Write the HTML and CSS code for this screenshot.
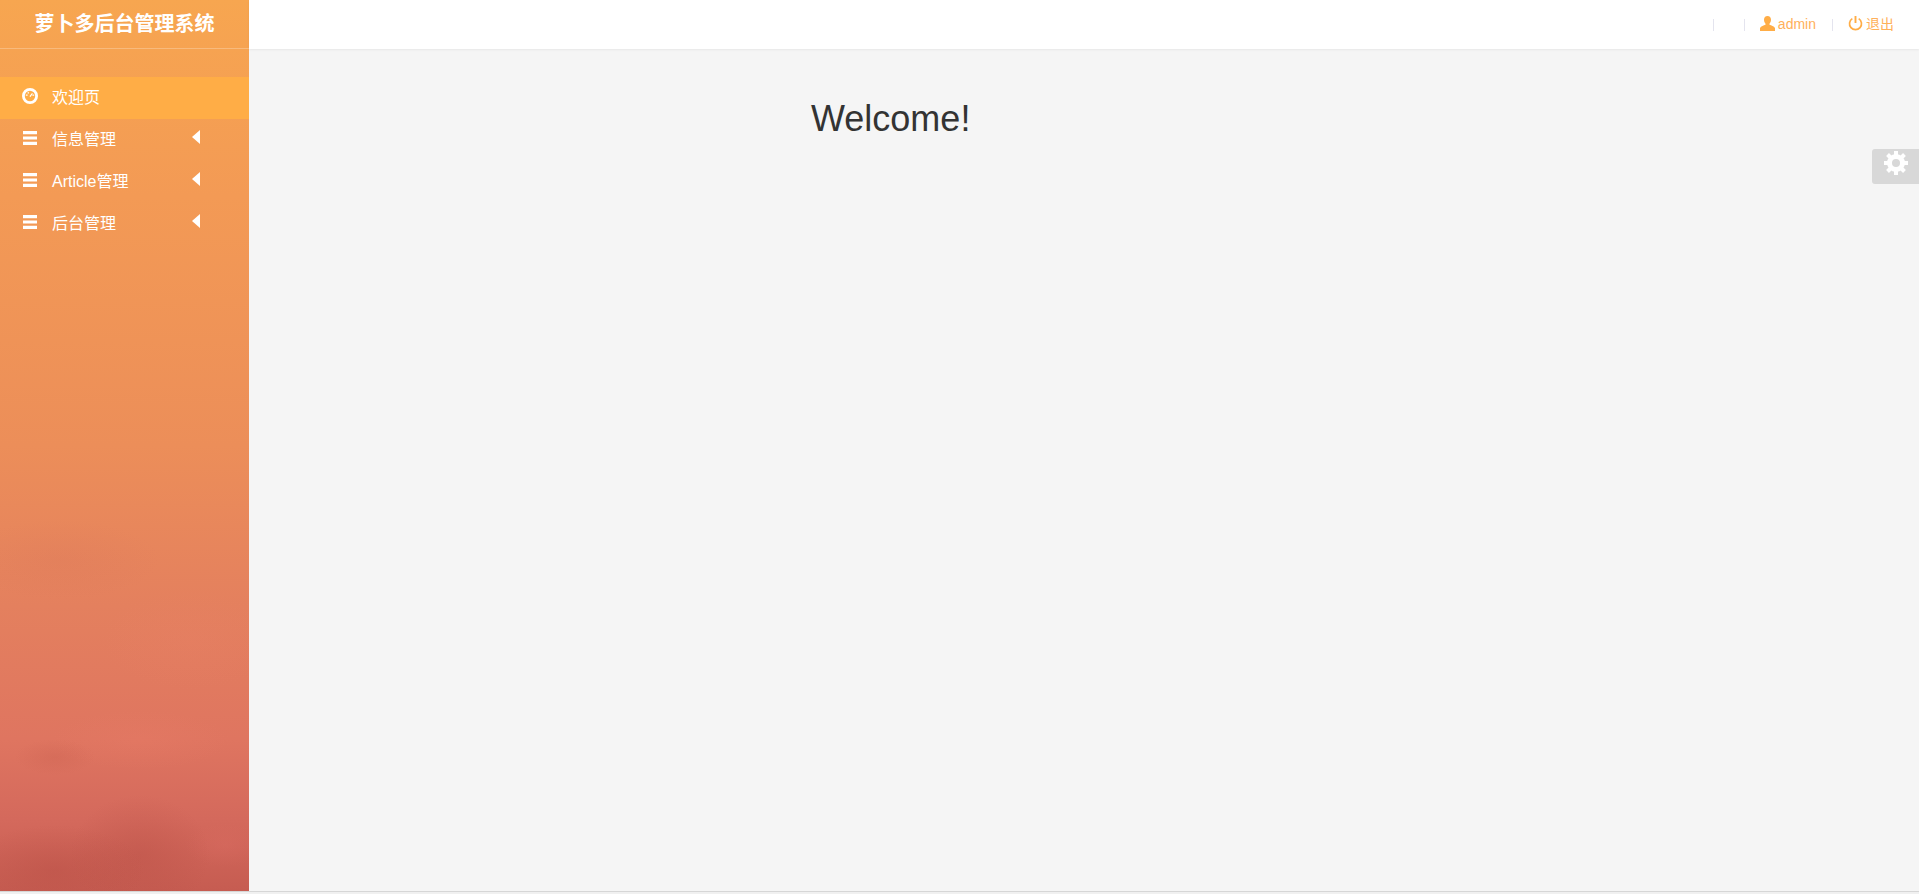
FILE: index.html
```html
<!DOCTYPE html>
<html lang="zh-CN">
  <head>
    <meta charset="UTF-8" />
    <meta name="viewport" content="width=device-width, initial-scale=1.0" />
    <title>萝卜多后台管理系统</title>
    <link rel="stylesheet" href="styles.css">
  </head>
  <body>
    <div class="wrapper">
      <aside class="sidebar">
        <div class="brand">萝卜多后台管理系统</div>
        <ul class="menu">
          <li class="menu-item active">
            <svg class="menu-icon" viewBox="0 0 16 16">
              <path fill="#fff" fill-rule="evenodd" d="M8 0a8 8 0 1 1 0 16A8 8 0 0 1 8 0zm0 2.800a5.200 5.200 0 1 0 0 10.400A5.200 5.200 0 0 0 8 2.800z" />
              <path fill="#fff" d="M3.800 6.400h1.800v1.400H3.800zM10.400 6.400h1.800v1.400h-1.800zM5.600 4.200h1.400v1.400H5.600zM7.400 8.200l2.600-3.200.8.6-2.200 3.400z" />
            </svg>
            <span class="menu-label">欢迎页</span>
          </li>
          <li class="menu-item">
            <svg class="menu-icon" viewBox="0 0 16 16"><path fill="#fff" d="M1 1h14v3.200H1zM1 6.400h14v3.200H1zM1 11.800h14V15H1z" /></svg>
            <span class="menu-label">信息管理</span>
            <svg class="menu-arrow" viewBox="0 0 8 14"><path fill="#fff" d="M8 0v14L0 7z" /></svg>
          </li>
          <li class="menu-item">
            <svg class="menu-icon" viewBox="0 0 16 16"><path fill="#fff" d="M1 1h14v3.200H1zM1 6.400h14v3.200H1zM1 11.800h14V15H1z" /></svg>
            <span class="menu-label">Article管理</span>
            <svg class="menu-arrow" viewBox="0 0 8 14"><path fill="#fff" d="M8 0v14L0 7z" /></svg>
          </li>
          <li class="menu-item">
            <svg class="menu-icon" viewBox="0 0 16 16"><path fill="#fff" d="M1 1h14v3.200H1zM1 6.400h14v3.200H1zM1 11.800h14V15H1z" /></svg>
            <span class="menu-label">后台管理</span>
            <svg class="menu-arrow" viewBox="0 0 8 14"><path fill="#fff" d="M8 0v14L0 7z" /></svg>
          </li>
        </ul>
      </aside>
      <div class="main">
        <header class="topbar">
          <span class="sep first"></span>
          <span class="sep"></span>
          <a class="top-link user">
            <svg class="top-icon" viewBox="0 0 15 15">
              <path fill="#ffad46" d="M7.500 0C9.700 0 11 1.600 11 3.800c0 1.500-.6 3-1.500 3.900v1.100c1.800.8 4.500 1.500 5.500 3.200V15H0v-3c1-1.700 3.700-2.400 5.500-3.200V7.700C4.600 6.800 4 5.300 4 3.800 4 1.600 5.300 0 7.500 0z" />
            </svg><span class="top-text">admin</span></a>
          <span class="sep"></span>
          <a class="top-link logout">
            <svg class="top-icon" viewBox="0 0 15 15">
              <path fill="none" stroke="#ffad46" stroke-width="1.700" d="M4.300 2.600a6 6 0 1 0 6.400 0" />
              <path fill="none" stroke="#ffad46" stroke-width="1.900" d="M7.500 0v7" />
            </svg><span class="top-text">退出</span></a>
        </header>
        <div class="content">
          <h1 class="welcome">Welcome!</h1>
        </div>
        <div class="settings-tab">
          <svg class="gear" viewBox="0 0 24 24">
            <g fill="#fff">
              <path id="tooth" d="M10 0h4v6h-4z" />
              <use href="#tooth" transform="rotate(45 12 12)" />
              <use href="#tooth" transform="rotate(90 12 12)" />
              <use href="#tooth" transform="rotate(135 12 12)" />
              <use href="#tooth" transform="rotate(180 12 12)" />
              <use href="#tooth" transform="rotate(225 12 12)" />
              <use href="#tooth" transform="rotate(270 12 12)" />
              <use href="#tooth" transform="rotate(315 12 12)" />
            </g>
            <circle cx="12" cy="12" r="6.500" fill="none" stroke="#fff" stroke-width="5" />
          </svg>
        </div>
      </div>
    </div>
    <div class="bottom-line"></div>
  </body>
</html>
```

FILE: styles.css
```css
* {
  margin: 0;
  padding: 0;
  box-sizing: border-box;
}
html,
body {
  height: 100%;
  overflow: hidden;
}
body {
  display: flex;
  flex-direction: column;
  background-color: #f5f5f5;
  font-family: "Liberation Sans", "Noto Sans CJK SC", sans-serif;
  font-size: 14px;
}
.wrapper {
  flex: 1;
  min-height: 0;
  display: flex;
}
.bottom-line {
  height: 3px;
  background-color: #f0f0f0;
  border-top: 1px solid #d6d6d6;
}

/* sidebar */
.sidebar {
  width: 249px;
  flex-shrink: 0;
  color: #fff;
  background-image:
    radial-gradient(ellipse 90px 45px at 55px 870px, rgb(180 75 65 / 0.35), transparent),
    radial-gradient(ellipse 70px 60px at 140px 855px, rgb(185 80 70 / 0.4), transparent),
    radial-gradient(ellipse 40px 22px at 225px 845px, rgb(222 110 100 / 0.3), transparent),
    radial-gradient(ellipse 40px 18px at 55px 757px, rgb(190 85 70 / 0.2), transparent),
    radial-gradient(ellipse 90px 30px at 140px 740px, rgb(235 125 105 / 0.25), transparent),
    radial-gradient(ellipse 100px 40px at 60px 560px, rgb(215 115 90 / 0.2), transparent),
    radial-gradient(ellipse 90px 50px at 190px 640px, rgb(235 130 105 / 0.2), transparent),
    linear-gradient(180deg, #f7a650 0%, #f39a55 22%, #ec8e59 50%, #e4805e 68%, #df7560 83%, #d4695c 92%, #c65c51 100%);
}
.brand {
  height: 49px;
  line-height: 48px;
  border-bottom: 1px solid rgb(255 255 255 / 0.25);
  text-align: center;
  font-size: 20px;
  font-weight: 700;
}
.menu {
  list-style: none;
  margin-top: 28px;
}
.menu-item {
  height: 42px;
  display: flex;
  align-items: center;
  padding-left: 22px;
}
.menu-item.active {
  background-color: #ffad46;
}
.menu-icon {
  width: 16px;
  height: 16px;
  margin-top: -5px;
}
.menu-label {
  margin-left: 14px;
  font-size: 16px;
  margin-top: -4px;
}
.menu-arrow {
  width: 8px;
  height: 14px;
  margin-left: auto;
  margin-top: -7px;
  margin-right: 49px;
}

/* top bar */
.main {
  flex: 1;
  min-width: 0;
  position: relative;
  display: flex;
  flex-direction: column;
}
.topbar {
  height: 49px;
  flex-shrink: 0;
  display: flex;
  align-items: center;
  justify-content: flex-end;
  padding-right: 25px;
  background-color: #fff;
  box-shadow: 0 1px 2px rgb(0 0 0 / 0.06);
}
.sep {
  width: 1px;
  height: 12px;
  background-color: #e4e4ee;
  margin-right: 15px;
}
.sep.first {
  margin-right: 30px;
}
.top-link {
  display: flex;
  align-items: center;
  gap: 3px;
  color: #ffb05a;
}
.user {
  margin-right: 16px;
}
.top-icon {
  width: 15px;
  height: 15px;
  margin-top: -3px;
}
.top-text {
  line-height: 20px;
  height: 20px;
  margin-top: -2px;
}

/* content */
.content {
  flex: 1;
  padding: 50px 0 0 562px;
}
.welcome {
  font-size: 36px;
  font-weight: 500;
  line-height: 40px;
  color: #333;
}
.settings-tab {
  position: absolute;
  top: 149px;
  right: 0;
  width: 47px;
  height: 35px;
  display: flex;
  align-items: center;
  justify-content: center;
  background-color: #d8d8d8;
  border-radius: 3px 0 0 3px;
}
.gear {
  width: 24px;
  height: 24px;
  margin-top: -7px;
}
```
